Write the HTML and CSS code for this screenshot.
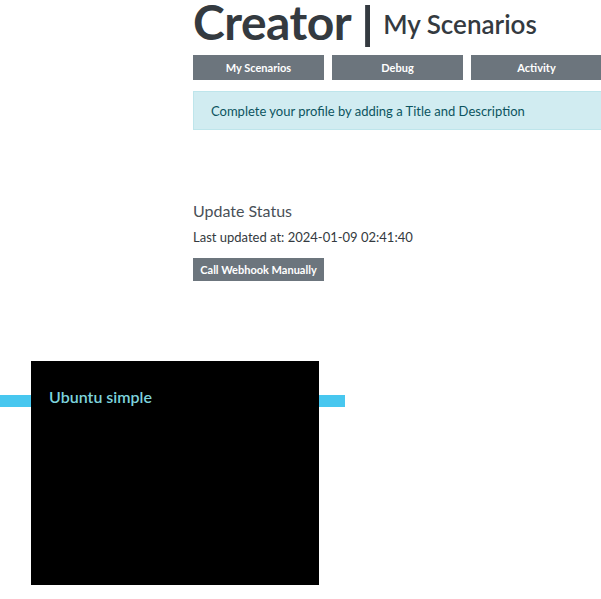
FILE: index.html
```html
<!DOCTYPE html>
<html>
<head>
<meta charset="utf-8">
<link rel="stylesheet" href="styles.css">
</head>
<body>
<div class="page">
  <main class="main">
    <h1 class="title"><span class="big">Creator</span><span class="sep">|</span><span class="sub">My Scenarios</span></h1>
    <nav class="tabs">
      <a class="btn tab">My Scenarios</a>
      <a class="btn tab">Debug</a>
      <a class="btn tab">Activity</a>
    </nav>
    <div class="alert">Complete your profile by adding a Title and Description</div>
    <section class="status">
      <h2 class="status-title">Update Status</h2>
      <p class="status-text">Last updated at: 2024-01-09 02:41:40</p>
      <a class="btn small">Call Webhook Manually</a>
    </section>
  </main>
  <section class="stage">
    <div class="bar"></div>
    <div class="card">
      <div class="card-title">Ubuntu simple</div>
    </div>
  </section>
</div>
</body>
</html>
```
FILE: styles.css
```css
html, body {
  margin: 0;
  padding: 0;
  background: #fff;
  overflow: hidden;
}
body {
  font-family: Lato, "Noto Sans", sans-serif;
  color: #212529;
}
.page {
  width: 601px;
  height: 599px;
  position: relative;
}
.main {
  margin-left: 193px;
  width: 420px;
}
.title {
  margin: 0;
  height: 50px;
  display: flex;
  align-items: flex-start;
  color: #343a40;
}
.big {
  font-size: 48px;
  font-weight: 700;
  letter-spacing: -0.5px;
  line-height: 43px;
}
.sep {
  font-size: 44px;
  font-weight: 400;
  line-height: 44px;
  margin: 0 10px 0 11px;
  transform: scaleX(1.6);
}
.sub {
  font-size: 26px;
  font-weight: 600;
  line-height: 30px;
  margin-top: 9px;
}
.tabs {
  display: flex;
  gap: 8px;
  margin-top: 5px;
}
.btn {
  display: flex;
  align-items: center;
  justify-content: center;
  background: #6c757d;
  color: #fff;
  font-weight: 700;
  font-size: 11px;
}
.tab {
  width: 131px;
  height: 25px;
}
.alert {
  margin-top: 11px;
  height: 37px;
  background: #d1ecf1;
  border: 1px solid #bee5eb;
  color: #0c5460;
  font-size: 13px;
  display: flex;
  align-items: center;
  padding-left: 17px;
}
.status {
  padding-top: 71px;
}
.status-title {
  margin: 0;
  font-size: 16px;
  font-weight: 400;
  color: #495057;
  line-height: 20px;
}
.status-text {
  margin: 7px 0 0;
  font-size: 13px;
  line-height: 18px;
  color: #343a40;
}
.small {
  display: inline-flex;
  margin-top: 12px;
  width: 131px;
  height: 23px;
  font-size: 11px;
}
.stage {
  position: relative;
  margin-top: 80px;
  height: 224px;
}
.bar {
  position: absolute;
  left: 0;
  top: 34px;
  width: 345px;
  height: 12px;
  background: #48c7ef;
}
.card {
  position: relative;
  margin-left: 31px;
  width: 288px;
  height: 224px;
  background: #000;
}
.card-title {
  padding: 26px 0 0 18px;
  font-size: 16px;
  font-weight: 600;
  color: #7dd3dc;
}
```
